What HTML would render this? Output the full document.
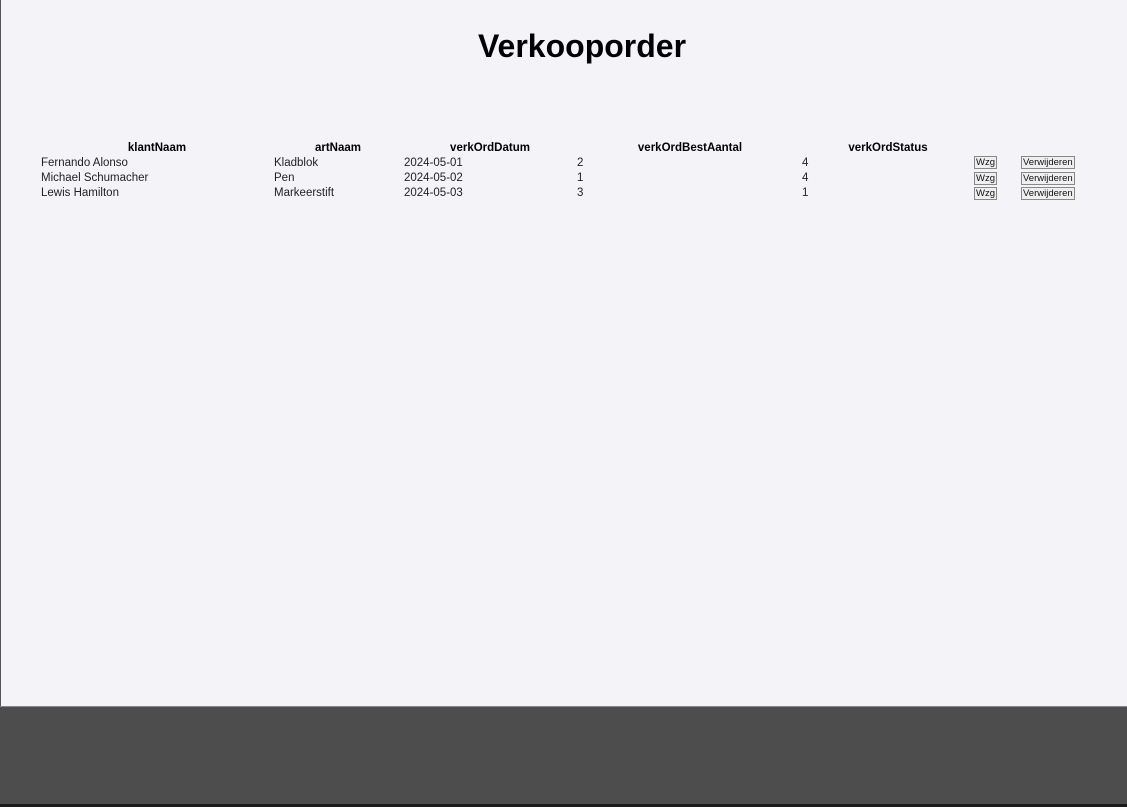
<!DOCTYPE html>
<html><head><meta charset="utf-8"><style>
html,body{margin:0;padding:0;}
body{width:1127px;height:807px;background:#f4f4f8;position:relative;overflow:hidden;font-family:"Liberation Sans",Arial,sans-serif;color:#111;}
.lb{position:absolute;left:0;top:0;width:1px;height:807px;background:#555;}
h1{position:absolute;left:0;width:1164px;top:28px;margin:0;text-align:center;font-size:32px;font-weight:bold;color:#000;}
.t{position:absolute;font-size:11.5px;line-height:14px;white-space:nowrap;color:#222;}
.h{font-weight:bold;color:#000;transform:translateX(-50%);}
.b{position:absolute;font-size:9.5px;line-height:12px;height:13px;border:1px solid #888;background:#efefef;padding:0 1px;box-sizing:border-box;color:#111;}
.ft{position:absolute;left:0;top:706px;width:1127px;height:98px;background:#4d4d4d;border-top:1px solid #888;box-sizing:border-box;}
.bb{position:absolute;left:0;top:804px;width:1127px;height:3px;background:#1b1b1b;}
</style></head><body>
<div class="lb"></div>
<h1>Verkooporder</h1>
<div class="t h" style="left:157px;top:141px">klantNaam</div>
<div class="t h" style="left:338px;top:141px">artNaam</div>
<div class="t h" style="left:490px;top:141px">verkOrdDatum</div>
<div class="t h" style="left:690px;top:141px">verkOrdBestAantal</div>
<div class="t h" style="left:888px;top:141px">verkOrdStatus</div>

<div class="t" style="left:41px;top:156px">Fernando Alonso</div>
<div class="t" style="left:274px;top:156px">Kladblok</div>
<div class="t" style="left:404px;top:156px">2024-05-01</div>
<div class="t" style="left:577px;top:156px">2</div>
<div class="t" style="left:802px;top:156px">4</div>
<div class="b" style="left:974px;top:156px">Wzg</div>
<div class="b" style="left:1021px;top:156px">Verwijderen</div>

<div class="t" style="left:41px;top:171px">Michael Schumacher</div>
<div class="t" style="left:274px;top:171px">Pen</div>
<div class="t" style="left:404px;top:171px">2024-05-02</div>
<div class="t" style="left:577px;top:171px">1</div>
<div class="t" style="left:802px;top:171px">4</div>
<div class="b" style="left:974px;top:172px">Wzg</div>
<div class="b" style="left:1021px;top:172px">Verwijderen</div>

<div class="t" style="left:41px;top:186px">Lewis Hamilton</div>
<div class="t" style="left:274px;top:186px">Markeerstift</div>
<div class="t" style="left:404px;top:186px">2024-05-03</div>
<div class="t" style="left:577px;top:186px">3</div>
<div class="t" style="left:802px;top:186px">1</div>
<div class="b" style="left:974px;top:187px">Wzg</div>
<div class="b" style="left:1021px;top:187px">Verwijderen</div>

<div class="ft"></div>
<div class="bb"></div>
</body></html>
